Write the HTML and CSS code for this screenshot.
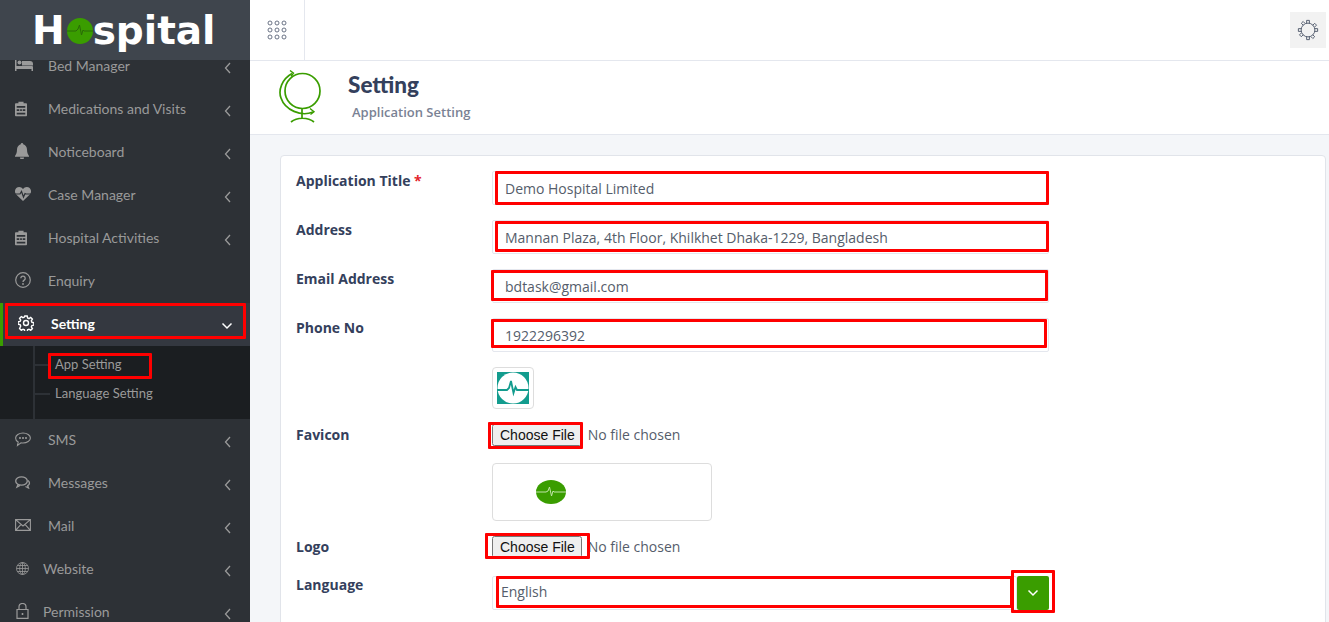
FILE: index.html
```html
<!DOCTYPE html>
<html>
<head>
    <title>Hospital - Application Setting</title>
    <link rel="stylesheet" href="styles.css">
</head>
<body>
    <div class="app">
        <aside class="sidebar">
            <div class="brand">
                <span class="brand-text">H</span>
                <svg class="brand-dot" viewBox="0 0 26 26"><circle cx="13" cy="13" r="13" fill="#3a9d00"/><path d="M0 13h9l2-2 1.500-4 2 10 1.500-5 1 1h9" fill="none" stroke="#2a6a08" stroke-width="1"/></svg>
                <span class="brand-text">spital</span>
            </div>
            <ul class="menu">
                <li class="item">
                    <span class="icon"><svg width="18" height="14" viewBox="0 0 18 14" fill="#9a9a9a"><path d="M0 0h1.500v8h15.500a1 1 0 0 1 1 1v4h-1.500v-2h-15v2H0z"/><circle cx="4.500" cy="4.500" r="2"/><path d="M7 3h8a3 3 0 0 1 3 3v1.500H7z"/></svg></span>
                    <span class="label">Bed Manager</span>
                    <svg class="chev" viewBox="0 0 8 12"><path d="M6 1L1.500 6 6 11"/></svg>
                </li>
                <li class="item">
                    <span class="icon"><svg width="12" height="17" viewBox="0 0 14 18" fill="#9a9a9a"><path d="M1 3h3V1h6v2h3a1 1 0 0 1 1 1v13a1 1 0 0 1-1 1H1a1 1 0 0 1-1-1V4a1 1 0 0 1 1-1z"/><path d="M2 6h10v2H2zM2 10h3v2H2zM6 10h2v2H6zM9 10h3v2H9zM2 14h10v2H2z" fill="#2d3136"/></svg></span>
                    <span class="label">Medications and Visits</span>
                    <svg class="chev" viewBox="0 0 8 12"><path d="M6 1L1.500 6 6 11"/></svg>
                </li>
                <li class="item">
                    <span class="icon"><svg width="14" height="16" viewBox="0 0 14 16" fill="#9a9a9a"><path d="M7 0a1.200 1.200 0 0 1 1.200 1.300C10.500 1.900 12 4 12 6.500c0 3.500 1 5 2 6.500v.8H0V13c1-1.500 2-3 2-6.500 0-2.500 1.500-4.600 3.800-5.200A1.200 1.200 0 0 1 7 0zM5 14.500h4a2 2 0 0 1-4 0z"/></svg></span>
                    <span class="label">Noticeboard</span>
                    <svg class="chev" viewBox="0 0 8 12"><path d="M6 1L1.500 6 6 11"/></svg>
                </li>
                <li class="item">
                    <span class="icon"><svg width="16" height="14" viewBox="0 0 16 14" fill="#9a9a9a"><path d="M8 14L1.200 7.500C-1.500 4.500 .5 0 4.200 0 5.800 0 7 .8 8 2c1-1.200 2.200-2 3.800-2 3.700 0 5.700 4.500 3 7.500z"/><path d="M0 7h5l1.500-2.500L8.500 10 10 6.500l1 .5h5" fill="none" stroke="#2d3136" stroke-width="1.200"/></svg></span>
                    <span class="label">Case Manager</span>
                    <svg class="chev" viewBox="0 0 8 12"><path d="M6 1L1.500 6 6 11"/></svg>
                </li>
                <li class="item">
                    <span class="icon"><svg width="12" height="17" viewBox="0 0 14 18" fill="#9a9a9a"><path d="M1 3h3V1h6v2h3a1 1 0 0 1 1 1v13a1 1 0 0 1-1 1H1a1 1 0 0 1-1-1V4a1 1 0 0 1 1-1z"/><path d="M2 6h10v2H2zM2 10h3v2H2zM6 10h2v2H6zM9 10h3v2H9zM2 14h10v2H2z" fill="#2d3136"/></svg></span>
                    <span class="label">Hospital Activities</span>
                    <svg class="chev" viewBox="0 0 8 12"><path d="M6 1L1.500 6 6 11"/></svg>
                </li>
                <li class="item">
                    <span class="icon"><svg width="16" height="16" viewBox="0 0 16 16"><circle cx="8" cy="8" r="7.300" fill="none" stroke="#9a9a9a" stroke-width="1.200"/><path d="M5.800 6.200a2.200 2.200 0 1 1 3.400 1.900C8.300 8.700 8 9 8 10" fill="none" stroke="#9a9a9a" stroke-width="1.300"/><circle cx="8" cy="12" r=".9" fill="#9a9a9a"/></svg></span>
                    <span class="label">Enquiry</span>
                </li>
                <li class="item item-active">
                    <span class="icon"><svg width="16" height="16" viewBox="0 0 16 16" fill="none" stroke="#fff" stroke-width="1.400"><circle cx="8" cy="8" r="2.500"/><path d="M6.800 1h2.400l.4 2 1.400.6 1.700-1.100 1.700 1.700-1.100 1.700.6 1.400 2 .4v2.400l-2 .4-.6 1.400 1.100 1.700-1.700 1.700-1.700-1.100-1.400.6-.4 2H6.800l-.4-2-1.400-.6-1.700 1.100-1.700-1.700L2.700 11l-.6-1.400-2-.4V6.800l2-.4.600-1.400-1.100-1.700 1.700-1.700L5 2.700l1.400-.6z"/></svg></span>
                    <span class="label">Setting</span>
                    <svg class="chev chev-down" viewBox="0 0 12 8"><path d="M1.500 1.500L6 6l4.500-4.500"/></svg>
                </li>
                <li class="submenu">
                    <a class="sub-link">App Setting</a>
                    <a class="sub-link">Language Setting</a>
                </li>
                <li class="item">
                    <span class="icon"><svg width="16" height="15" viewBox="0 0 16 15" fill="none" stroke="#9a9a9a" stroke-width="1.100"><path d="M8 1c4 0 7.400 2.200 7.400 5S12 11 8 11c-.7 0-1.400 0-2-.2L2.500 13.500l.7-3.400C1.500 9.200.6 7.700.6 6 .6 3.200 4 1 8 1z"/><circle cx="5" cy="6" r=".5"/><circle cx="8" cy="6" r=".5"/><circle cx="11" cy="6" r=".5"/></svg></span>
                    <span class="label">SMS</span>
                    <svg class="chev" viewBox="0 0 8 12"><path d="M6 1L1.500 6 6 11"/></svg>
                </li>
                <li class="item">
                    <span class="icon"><svg width="16" height="13" viewBox="0 0 16 13" fill="none" stroke="#9a9a9a" stroke-width="1.300"><ellipse cx="6.500" cy="5" rx="5.800" ry="4.200"/><path d="M3 8.500L2 11l3-1.600M13 4.500c2 1.500 2 4-.3 5.200l.8 2.300-3-1.500"/></svg></span>
                    <span class="label">Messages</span>
                    <svg class="chev" viewBox="0 0 8 12"><path d="M6 1L1.500 6 6 11"/></svg>
                </li>
                <li class="item">
                    <span class="icon"><svg width="16" height="12" viewBox="0 0 16 12" fill="none" stroke="#9a9a9a" stroke-width="1.100"><path d="M.6.600h14.800v10.800H.6zM.6.600L8 7l7.400-6.400M.6 11.400l5.400-6M15.400 11.400l-5.400-6"/></svg></span>
                    <span class="label">Mail</span>
                    <svg class="chev" viewBox="0 0 8 12"><path d="M6 1L1.500 6 6 11"/></svg>
                </li>
                <li class="item item-tight">
                    <span class="icon"><svg width="13" height="13" viewBox="0 0 13 13" fill="none" stroke="#9a9a9a" stroke-width=".8"><circle cx="6.500" cy="6.500" r="6"/><ellipse cx="6.500" cy="6.500" rx="2.800" ry="6"/><path d="M6.500 .5v12M.5 6.500h12M1.300 3.500h10.400M1.300 9.500h10.400"/></svg></span>
                    <span class="label">Website</span>
                    <svg class="chev" viewBox="0 0 8 12"><path d="M6 1L1.500 6 6 11"/></svg>
                </li>
                <li class="item item-tight">
                    <span class="icon"><svg width="13" height="16" viewBox="0 0 13 16" fill="none" stroke="#9a9a9a" stroke-width="1.200"><path d="M1 6.500h11v8.900H1zM3 6.500V4a3.500 3.500 0 0 1 7 0v2.500"/><path d="M6.500 10v2" stroke-width="1.600"/></svg></span>
                    <span class="label">Permission</span>
                    <svg class="chev" viewBox="0 0 8 12"><path d="M6 1L1.500 6 6 11"/></svg>
                </li>
            </ul>
        </aside>

        <main class="main">
            <header class="topbar">
                <div class="apps">
                    <svg width="20" height="20" viewBox="0 0 20 20" fill="none" stroke="#5b6478" stroke-width=".9"><circle cx="3" cy="3" r="2"/><circle cx="10" cy="3" r="2"/><circle cx="17" cy="3" r="2"/><circle cx="3" cy="10" r="2"/><circle cx="10" cy="10" r="2"/><circle cx="17" cy="10" r="2"/><circle cx="3" cy="17" r="2"/><circle cx="10" cy="17" r="2"/><circle cx="17" cy="17" r="2"/></svg>
                </div>
                <div class="gear-btn">
                    <svg width="22" height="22" viewBox="0 0 24 24" fill="none" stroke="#4b5568" stroke-width="1"><circle cx="12" cy="12" r="7.500"/><path d="M10.500 4.700V1.500h3v3.200M17.200 6.800l2.100-2.100 2 2-2.100 2.100M19.300 10.500h3.200v3h-3.200M17.200 17.200l2.100 2.100-2 2-2.100-2.100M13.500 19.300v3.200h-3v-3.200M6.800 17.200l-2.100 2.100-2-2 2.100-2.100M4.700 13.500H1.500v-3h3.200M6.800 6.800L4.700 4.700l2-2 2.100 2.100"/></svg>
                </div>
            </header>

            <section class="page-head">
                <svg class="globe" width="42" height="54" viewBox="0 0 42 54" fill="none" stroke="#3a9d00" stroke-width="1.700"><circle cx="23.500" cy="21" r="17.500"/><path d="M13 3.500C3 9-1 20 2 28c4 12 20 19 32 14"/><path d="M11 .5l3.500 2.700-2.500 3.300M31 38.500l4 3.300-3.500 2.700" stroke-width="1.400"/><path d="M23 39v9M12 52c6-5 17-5 23 0"/></svg>
                <div class="page-title">
                    <h1>Setting</h1>
                    <p>Application Setting</p>
                </div>
            </section>

            <section class="card">
                <div class="row">
                    <label class="field-label">Application Title <span class="req">*</span></label>
                    <input class="text-input" type="text" value="Demo Hospital Limited">
                </div>
                <div class="row">
                    <label class="field-label">Address</label>
                    <input class="text-input" type="text" value="Mannan Plaza, 4th Floor, Khilkhet Dhaka-1229, Bangladesh">
                </div>
                <div class="row">
                    <label class="field-label">Email Address</label>
                    <input class="text-input" type="text" value="bdtask@gmail.com">
                </div>
                <div class="row">
                    <label class="field-label">Phone No</label>
                    <input class="text-input" type="text" value="1922296392">
                </div>
                <div class="row">
                    <span></span>
                    <div class="thumb thumb-small">
                        <svg width="32" height="32" viewBox="0 0 32 32"><rect width="32" height="32" fill="#139c8e"/><circle cx="16" cy="16" r="15.500" fill="#fff"/><path d="M0 18h10l2-2 2-7 2.500 12 2-6 1.500 3h12" fill="none" stroke="#139c8e" stroke-width="1.800"/></svg>
                    </div>
                </div>
                <div class="row row-file">
                    <label class="field-label">Favicon</label>
                    <input class="file-input" type="file">
                </div>
                <div class="row">
                    <span></span>
                    <div class="thumb thumb-wide">
                        <svg width="30" height="24" viewBox="0 0 30 24"><ellipse cx="15" cy="12" rx="15" ry="12" fill="#3a9d00"/><path d="M0 12h10l2-1 1.500-4 2 9 1.500-5 1 1h12" fill="none" stroke="#bfe3a8" stroke-width="1"/></svg>
                    </div>
                </div>
                <div class="row row-file">
                    <label class="field-label">Logo</label>
                    <input class="file-input" type="file">
                </div>
                <div class="row row-lang">
                    <label class="field-label">Language</label>
                    <div class="select">
                        <span class="select-value">English</span>
                        <span class="select-arrow"><svg width="12" height="8" viewBox="0 0 12 8" fill="none" stroke="#fff" stroke-width="1.500"><path d="M1.500 1.500L6 6l4.500-4.500"/></svg></span>
                    </div>
                </div>
            </section>
        </main>

        <div class="mark mark-setting"></div>
        <div class="mark mark-app"></div>
        <div class="mark mark-title"></div>
        <div class="mark mark-address"></div>
        <div class="mark mark-email"></div>
        <div class="mark mark-phone"></div>
        <div class="mark mark-favicon"></div>
        <div class="mark mark-logo"></div>
        <div class="mark mark-lang"></div>
        <div class="mark mark-arrow"></div>
    </div>
</body>
</html>
```

FILE: styles.css
```css
html, body {
    margin: 0;
    height: 100%;
    overflow: hidden;
}

body {
    font-family: "Open Sans", sans-serif;
    font-size: 14px;
    color: #555d6b;
    background-color: #f4f6f9;
}

.app {
    position: relative;
    display: flex;
    height: 622px;
    overflow: hidden;
}

/* sidebar */
.sidebar {
    width: 250px;
    flex-shrink: 0;
    background-color: #2d3136;
    overflow: hidden;
}

.brand {
    position: relative;
    z-index: 2;
    height: 60px;
    display: flex;
    align-items: center;
    padding-left: 32px;
    box-sizing: border-box;
    background-color: #3f454d;
}

.brand-text {
    font-family: "DejaVu Sans", sans-serif;
    font-weight: bold;
    font-size: 39px;
    line-height: 1;
    color: #fff;
}

.brand-dot {
    width: 26px;
    height: 26px;
    margin: 2px 0 0 2px;
}

.menu {
    list-style: none;
    margin: -15px 0 0;
    padding: 0;
}

.item {
    height: 43px;
    display: flex;
    align-items: center;
    padding-left: 15px;
    padding-right: 18px;
    font-family: "Lato", sans-serif;
    font-size: 14px;
    color: #9a9a9a;
}

.icon {
    width: 33px;
    flex-shrink: 0;
    display: flex;
    align-items: center;
    margin-top: -3px;
}

.item-tight .icon {
    width: 28px;
    padding-left: 1px;
    box-sizing: border-box;
}

.label {
    flex: 1;
    margin-top: -2px;
}

.chev {
    width: 8px;
    height: 12px;
    margin-top: 2px;
    fill: none;
    stroke: #9a9a9a;
    stroke-width: 1.300;
}

.item-active {
    background-color: #343840;
    border-left: 3px solid #3a9d00;
    font-weight: bold;
    color: #fff;
}

.chev-down {
    width: 12px;
    height: 8px;
    margin-right: -1px;
    stroke: #fff;
    stroke-width: 1.500;
}

.submenu {
    height: 73px;
    box-sizing: border-box;
    padding: 4px 0 0 55px;
    display: flex;
    flex-direction: column;
    background-color: #1b1e21;
    position: relative;
    font-family: "Lato", sans-serif;
    font-size: 13px;
    color: #9a9a9a;
}

.submenu::before {
    content: "";
    position: absolute;
    left: 33px;
    top: 0;
    bottom: 0;
    width: 2px;
    background-color: #2d3136;
}

.sub-link {
    position: relative;
    height: 29px;
    line-height: 29px;
}

.sub-link::before {
    content: "";
    position: absolute;
    left: -20px;
    top: 14px;
    width: 15px;
    height: 2px;
    background-color: #2d3136;
}

/* top bar */
.main {
    flex: 1;
    min-width: 0;
}

.topbar {
    height: 61px;
    box-sizing: border-box;
    display: flex;
    justify-content: space-between;
    align-items: center;
    background-color: #fff;
    border-bottom: 1px solid #e4e7ee;
    padding-right: 3px;
}

.apps {
    width: 55px;
    height: 60px;
    display: flex;
    align-items: center;
    justify-content: center;
    box-sizing: border-box;
    border-right: 1px solid #e4e7ee;
}

.gear-btn {
    width: 36px;
    height: 36px;
    display: flex;
    align-items: center;
    justify-content: center;
    background-color: #f2f2f2;
}

.page-head {
    height: 74px;
    box-sizing: border-box;
    display: flex;
    background-color: #fff;
    border-bottom: 1px solid #e4e7ee;
    padding: 9px 0 0 29px;
}

.globe {
    flex-shrink: 0;
}

.page-title {
    margin-left: 27px;
}

h1 {
    margin: 0;
    font-family: "Lato", sans-serif;
    font-size: 22.500px;
    line-height: 30px;
    font-weight: 900;
    color: #34405c;
}

.page-title p {
    margin: 2px 0 0 4px;
    font-size: 13px;
    font-weight: 600;
    line-height: 20px;
    color: #7a8294;
}

/* form */
.card {
    margin: 20px 3px 0 30px;
    padding: 15px 15px 0;
    background-color: #fff;
    border: 1px solid #e1e4ea;
    border-radius: 4px;
    height: 600px;
}

.row {
    display: grid;
    grid-template-columns: 196px 557px;
    margin-bottom: 15px;
}

.row-file {
    align-items: center;
}

.row-file .field-label {
    margin-top: -3px;
}

.row-lang {
    margin-top: 16px;
}

.row-lang .field-label {
    margin-top: -1px;
}

.field-label {
    font-size: 14px;
    font-weight: 700;
    line-height: 20px;
    color: #34405c;
}

.req {
    color: #e3242b;
}

.text-input {
    height: 34px;
    box-sizing: border-box;
    padding: 6px 12px;
    border: 1px solid #e4e7ee;
    border-radius: 2px;
    font-family: "Open Sans", sans-serif;
    font-size: 14px;
    color: #555d6b;
    outline: none;
}

.thumb {
    box-sizing: border-box;
    border: 1px solid #dddddd;
    border-radius: 4px;
    display: flex;
    align-items: center;
}

.thumb-small {
    width: 42px;
    height: 42px;
    justify-content: center;
}

.thumb-wide {
    width: 220px;
    height: 58px;
    padding-left: 43px;
}

.file-input {
    height: 24px;
    font-family: "Open Sans", sans-serif;
    font-size: 14px;
    color: #555d6b;
}

.file-input::file-selector-button {
    font-family: "Liberation Sans", sans-serif;
    font-size: 14px;
    color: #111;
    height: 22px;
    padding: 0 5px 0 6px;
    margin-right: 6px;
}

.select {
    display: flex;
    height: 34px;
}

.select-value {
    flex: 1;
    box-sizing: border-box;
    padding-left: 8px;
    line-height: 30px;
    border: 1px solid #e4e7ee;
    border-radius: 2px;
}

.select-arrow {
    width: 32px;
    display: flex;
    align-items: center;
    justify-content: center;
    background-color: #3a9d00;
    border-radius: 2px;
}

/* red annotation boxes drawn over the screenshot */
.mark {
    position: absolute;
    box-sizing: border-box;
    border: 3px solid #ff0000;
    border-radius: 1px;
    pointer-events: none;
}

.mark-setting { left: 5px; top: 303px; width: 241px; height: 36px; }
.mark-app { left: 48px; top: 353px; width: 104px; height: 26px; }
.mark-title { left: 495px; top: 171px; width: 554px; height: 34px; }
.mark-address { left: 495px; top: 221px; width: 554px; height: 31px; }
.mark-email { left: 491px; top: 270px; width: 557px; height: 31px; }
.mark-phone { left: 491px; top: 319px; width: 556px; height: 29px; }
.mark-favicon { left: 488px; top: 422px; width: 95px; height: 27px; }
.mark-logo { left: 485px; top: 533px; width: 105px; height: 26px; }
.mark-lang { left: 496px; top: 576px; width: 517px; height: 32px; }
.mark-arrow { left: 1011px; top: 570px; width: 44px; height: 43px; }
```
